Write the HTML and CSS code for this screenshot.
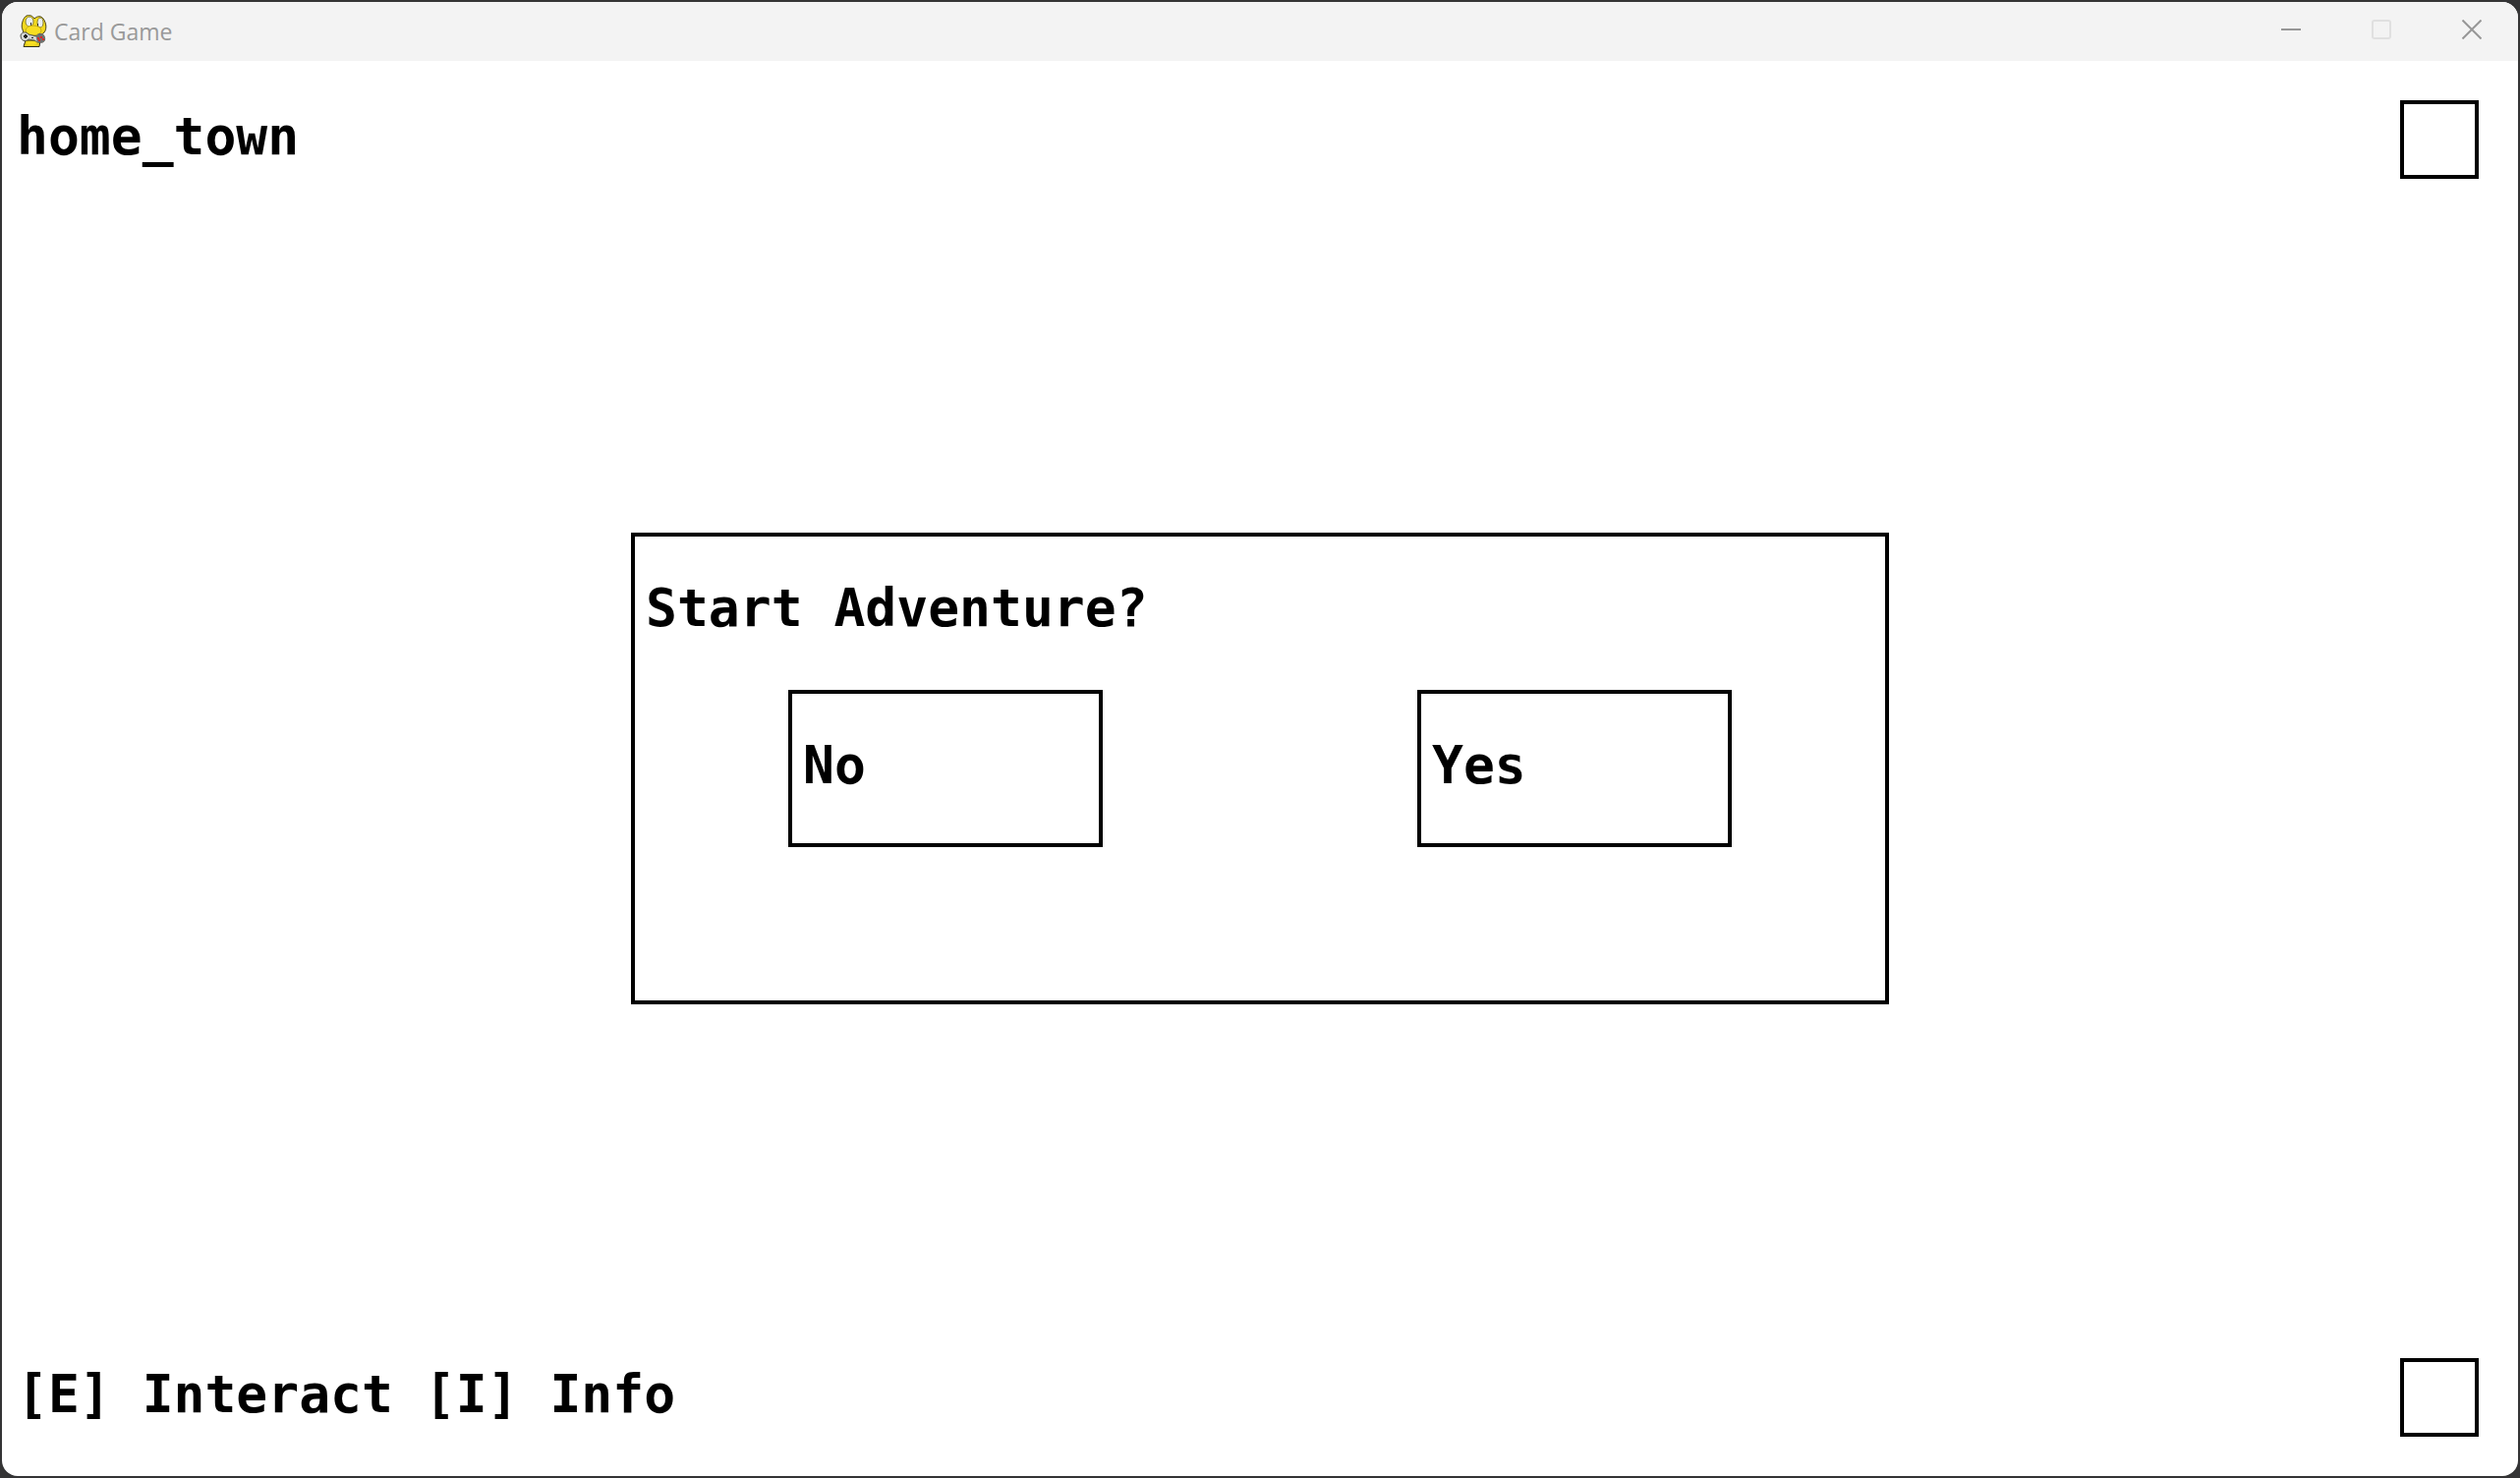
FILE: index.html
```html
<!DOCTYPE html>
<html lang="en">
<head>
<meta charset="utf-8">
<title>Card Game</title>
<link rel="stylesheet" href="styles.css">
</head>
<body>
<div class="window">
  <header class="titlebar">
    <svg class="logo" viewBox="0 0 28 33" aria-hidden="true">
      <path d="M4 32.500L6 26H21L20 32.500Z" fill="#e8cf1c" stroke="#33301a" stroke-width="1"/>
      <path d="M3 15C1 12 3 3 7 1C11 0 13 1 15 4C18 1 22 1 24 4C27 8 28 14 25 18C22 22 7 23 4 19Z" fill="#f3d91e" stroke="#4a4318" stroke-width="1"/>
      <ellipse cx="10" cy="7" rx="4" ry="5" fill="#e9eef0" stroke="#8a8438" stroke-width="1"/>
      <ellipse cx="21" cy="8" rx="3" ry="5" fill="#e9eef0" stroke="#8a8438" stroke-width="1"/>
      <path d="M11 8h1v3h-1zM18 9h1v3h-1z" fill="#2b2b2b"/>
      <ellipse cx="14" cy="16" rx="8" ry="5" fill="#f7de22" stroke="#c4ad18" stroke-width="1"/>
      <path d="M1 21C2 17 7 17 9 20L17 22C18 19 24 18 25 22C27 26 24 29 21 28C18 29 17 27 15 26L9 25C6 28 1 27 1 21Z" fill="#d3d6d5" stroke="#55554a" stroke-width="1"/>
      <path d="M17 22C18 19 24 18 25 22C27 26 24 29 21 28C18 29 17 27 17 22Z" fill="#6d706f"/>
      <path d="M4 21h4v2H4zM5 20h2v4H5zM12 23h2v1h-2z" fill="#222"/>
      <path d="M18 23h2v2h-2zM21 22h2v2h-2zM19 25h2v2h-2zM23 24h2v2h-2z" fill="#e02828"/>
      <ellipse cx="12" cy="29" rx="5" ry="2" fill="#f7de22"/>
    </svg>
    <h1 class="title">Card Game</h1>
    <div class="controls">
      <button class="control" type="button" aria-label="Minimize">
        <svg class="glyph" viewBox="0 0 20 20"><path d="M0 10H20"/></svg>
      </button>
      <button class="control" type="button" aria-label="Maximize" disabled>
        <svg class="glyph" viewBox="0 0 20 20"><rect x="1" y="1" width="18" height="18" rx="2"/></svg>
      </button>
      <button class="control" type="button" aria-label="Close">
        <svg class="glyph" viewBox="0 0 20 20"><path d="M0.5 0.5L19.500 19.500M19.500 0.500L0.500 19.500"/></svg>
      </button>
    </div>
  </header>
  <main class="game">
    <div class="bar">
      <p class="text">home_town</p>
      <button class="slot" type="button" aria-label="Menu"></button>
    </div>
    <section class="dialog" role="dialog" aria-labelledby="question">
      <h2 class="text" id="question">Start Adventure?</h2>
      <div class="choices">
        <button class="choice text" type="button">No</button>
        <button class="choice text" type="button">Yes</button>
      </div>
    </section>
    <div class="bar">
      <p class="text">[E] Interact [I] Info</p>
      <button class="slot" type="button" aria-label="Inventory"></button>
    </div>
  </main>
</div>
</body>
</html>
```
FILE: styles.css
```css
* {
  box-sizing: border-box;
}

body {
  margin: 0;
  min-height: 100vh;
  padding: 2px;
  display: flex;
  background: #343435;
}

.window {
  flex: 1;
  display: flex;
  flex-direction: column;
  border-radius: 16px;
  overflow: hidden;
  background: #fff;
}

.titlebar {
  height: 60px;
  display: flex;
  align-items: center;
  padding: 0 1px 0 18px;
  background: #f3f3f3;
}

.logo {
  width: 28px;
  height: 33px;
  margin-bottom: 2px;
}

.title {
  flex: 1;
  margin: 0 0 0 7px;
  font: 400 23px/32px "Open Sans", "Noto Sans", sans-serif;
  color: #999;
}

.controls {
  display: flex;
  align-self: stretch;
}

.control {
  width: 92px;
  padding: 0 0 4px;
  border: 0;
  display: flex;
  align-items: center;
  justify-content: center;
  background: none;
}

.glyph {
  width: 20px;
  height: 20px;
  fill: none;
  stroke: #979797;
  stroke-width: 2;
}

.control:disabled .glyph {
  stroke: #e0e0e0;
}

.game {
  flex: 1;
  display: flex;
  flex-direction: column;
  justify-content: space-between;
}

.text {
  margin: 0;
  font: 700 53px/154px "DejaVu Sans Mono", monospace;
  color: #000;
  white-space: pre;
}

.bar {
  height: 160px;
  display: flex;
  justify-content: space-between;
  padding: 0 40px 0 15px;
}

.slot {
  width: 80px;
  height: 80px;
  align-self: center;
  padding: 0;
  border: 4px solid #000;
  background: #fff;
}

.dialog {
  width: 50%;
  align-self: center;
  padding-bottom: 156px;
  border: 4px solid #000;
}

.dialog > .text {
  padding-left: 11px;
  line-height: 146px;
  margin-bottom: 10px;
}

.choices {
  display: flex;
  justify-content: space-between;
  padding: 0 156px;
}

.choice {
  width: 320px;
  height: 160px;
  padding: 0 0 6px 11px;
  border: 4px solid #000;
  background: #fff;
  text-align: left;
  line-height: 146px;
}
```
